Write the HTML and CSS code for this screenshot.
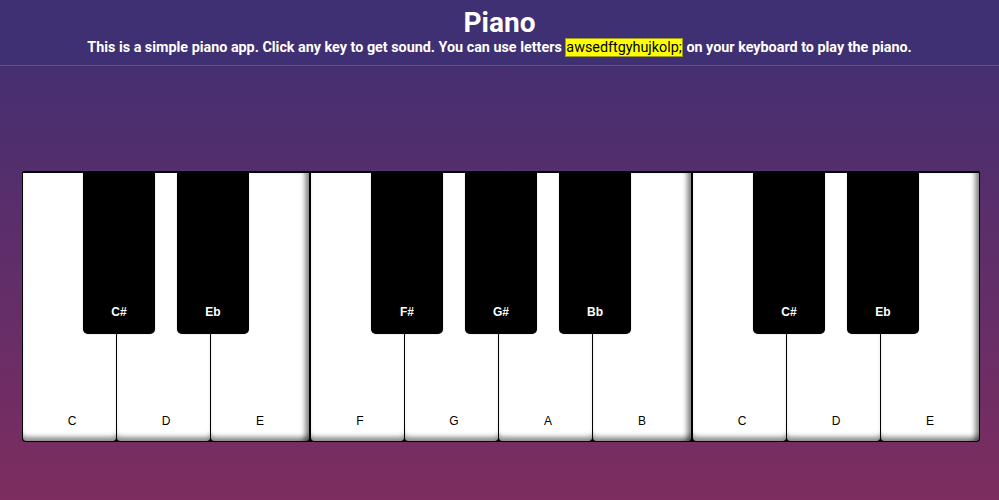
FILE: index.html
```html
<!DOCTYPE html>
<html lang="en">
<head>
<meta charset="utf-8">
<title>Piano</title>
<link rel="stylesheet" href="styles.css">
</head>
<body>
<header class="header">
  <h1 class="title">Piano</h1>
  <p class="subtitle">This is a simple piano app. Click any key to get sound. You can use letters <mark class="letters">awsedftgyhujkolp;</mark> on your keyboard to play the piano.</p>
</header>
<main class="stage">
  <div class="piano">
    <div class="group">
      <div class="white">C<div class="black">C#</div></div>
      <div class="white">D<div class="black">Eb</div></div>
      <div class="white">E</div>
    </div>
    <div class="group">
      <div class="white">F<div class="black">F#</div></div>
      <div class="white">G<div class="black">G#</div></div>
      <div class="white">A<div class="black">Bb</div></div>
      <div class="white">B</div>
    </div>
    <div class="group">
      <div class="white">C<div class="black">C#</div></div>
      <div class="white">D<div class="black">Eb</div></div>
      <div class="white">E</div>
    </div>
  </div>
</main>
</body>
</html>
```
FILE: styles.css
```css
html, body {
  margin: 0;
  height: 100%;
}
body {
  background: linear-gradient(to bottom, #3e2f74 0%, #7d2d5f 100%);
  font-family: Roboto, "Liberation Sans", sans-serif;
  color: #fff;
  overflow: hidden;
}
.header {
  text-align: center;
  height: 66px;
  border-bottom: 1px solid #5d4f92;
  background: #3f2f73;
  box-sizing: border-box;
  padding-top: 6px;
}
.title {
  margin: 0;
  font-size: 28px;
  font-weight: 700;
  line-height: 33px;
}
.subtitle {
  margin: 0;
  font-size: 14.35px;
  font-weight: 700;
  line-height: 18px;
}
.letters {
  background: #ffff00;
  color: #000;
  font-weight: 400;
  border: 1px solid #a09a20;
  padding: 0;
}
.stage {
  padding: 105px 19px 0 22px;
}
.piano {
  display: flex;
  gap: 2px;
  width: 958px;
  height: 271px;
  box-sizing: border-box;
  background: #000;
  padding: 2px 1px 1px 1px;
  border-radius: 2px 2px 4px 4px;
}
.group {
  display: flex;
  gap: 1px;
}
.white {
  position: relative;
  width: 93px;
  box-sizing: border-box;
  padding-left: 5px;
  padding-bottom: 13px;
  background: #fff;
  color: #000;
  font-family: "Liberation Sans", Arial, sans-serif;
  font-size: 12px;
  display: flex;
  align-items: flex-end;
  justify-content: center;
  border-radius: 0 0 4px 4px;
  box-shadow: inset 0 -7px 5px -3px rgba(0, 0, 0, 0.45);
}
.white:last-child {
  width: 98px;
  padding-right: 5px;
  box-shadow: inset 0 -7px 5px -3px rgba(0, 0, 0, 0.45), inset -7px 0 5px -3px rgba(0, 0, 0, 0.45);
}
.black {
  position: absolute;
  top: -2px;
  right: -39px;
  width: 72px;
  height: 163px;
  box-sizing: border-box;
  background: #000;
  color: #fff;
  font-weight: 700;
  font-size: 12px;
  border-radius: 0 0 5px 5px;
  box-shadow: 0 0 1px rgba(120, 120, 120, 0.9);
  display: flex;
  align-items: flex-end;
  justify-content: center;
  padding-bottom: 15px;
  z-index: 2;
}
```
